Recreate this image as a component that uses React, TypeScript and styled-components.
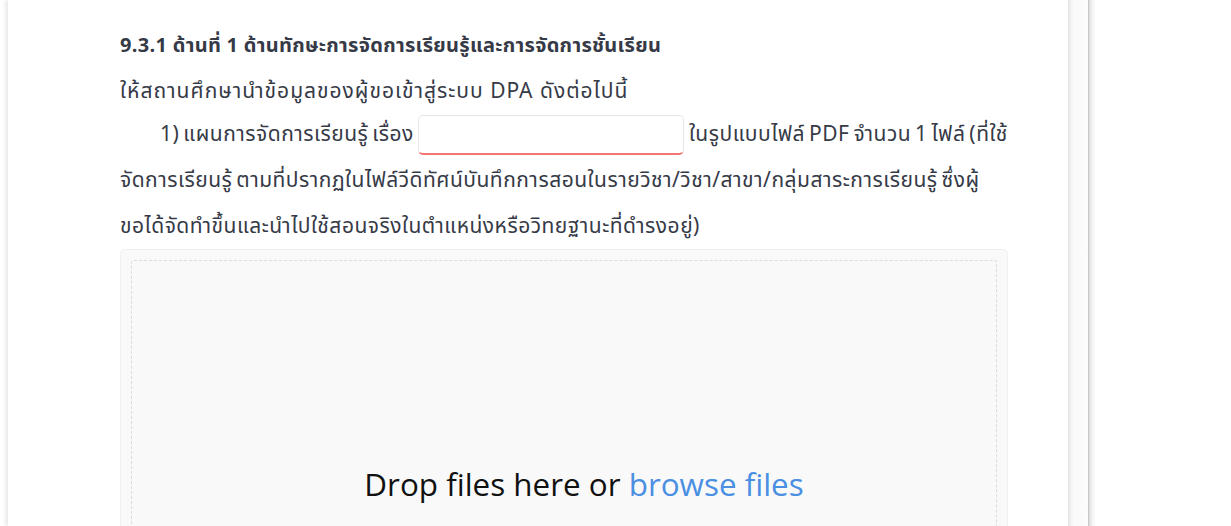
import React from "react";
import styled, { createGlobalStyle } from "styled-components";

const Global = createGlobalStyle`
  html, body { margin: 0; padding: 0; background: #fff; }
  body { overflow: hidden; height: 526px; }
`;

const Page = styled.div`
  display: flex;
  height: 526px;
  background: #fff;
  padding-left: 8px;
`;

const Card = styled.main`
  width: 1060px;
  flex: none;
  background: #fff;
  box-shadow: -3px 0 3px rgba(0, 0, 0, 0.08);
  padding: 0 60px 0 112px;
  box-sizing: border-box;
  overflow: hidden;
  font-family: "Noto Sans Thai", "Noto Sans", "DejaVu Sans", sans-serif;
  color: #363a47;
`;

const Gutter = styled.div`
  width: 20px;
  flex: none;
  background: linear-gradient(to right, #e2e2e2 0, #f3f3f3 3px, #fafafa 6px, #fcfcfc 100%);
`;

const Side = styled.div`
  flex: 1;
  border-left: 1px solid #c9c9c9;
  background: linear-gradient(to right, #dcdcdc 0, #f2f2f2 3px, #fff 7px, #fff 100%);
`;

const Column = styled.div`
  width: 888px;
`;

const Line = styled.div<{ $bold?: boolean }>`
  font-size: ${(p) => (p.$bold ? 20 : 21)}px;
  letter-spacing: ${(p) => (p.$bold ? 0.3 : 1)}px;
  line-height: 45px;
  font-weight: ${(p) => (p.$bold ? 700 : 400)};
  white-space: nowrap;
`;

const CutLine = styled(Line)`
  margin-top: -36px;
  margin-bottom: 15px;
`;

const Para = styled.p`
  margin: -2px 0 0;
  font-size: 21px;
  letter-spacing: 0.5px;
  word-spacing: -2px;
  line-height: 46px;
  text-indent: 40px;
  white-space: nowrap;
`;

const TitleInput = styled.input`
  width: 266px;
  height: 40px;
  box-sizing: border-box;
  margin: 0 5px 0 4px;
  vertical-align: middle;
  border: 1px solid #e3e7ec;
  border-bottom: 2px solid #f47474;
  border-radius: 5px;
  background: #fff;
  outline: none;
  font: inherit;
  text-indent: 0;
`;

const DropZone = styled.div`
  margin-top: -1px;
  height: 300px;
  background: #f9f9f9;
  border: 1px solid #efefef;
  border-radius: 5px;
  padding: 10px;
  box-sizing: border-box;
`;

const DropInner = styled.div`
  height: 100%;
  border: 1px dashed #dcdcdc;
  border-bottom: none;
  border-radius: 3px;
  display: flex;
  align-items: flex-start;
  justify-content: center;
  padding: 204px 0 0 40px;
  box-sizing: border-box;
`;

const DropTitle = styled.div`
  font-family: "Open Sans", "Noto Sans", sans-serif;
  font-size: 31.4px;
  color: #111;
  line-height: 1.2;
`;

const Browse = styled.span`
  color: #4a8fe2;
  cursor: pointer;
`;

export default function App() {
  return (
    <>
      <Global />
      <Page>
        <Card>
          <Column>
            <CutLine $bold>ผู้ขอรับการประเมินนำเสนอผลงาน ตามองค์ประกอบ ดังนี้</CutLine>
            <Line $bold>9.3.1 ด้านที่ 1 ด้านทักษะการจัดการเรียนรู้และการจัดการชั้นเรียน</Line>
            <Line>ให้สถานศึกษานำข้อมูลของผู้ขอเข้าสู่ระบบ DPA ดังต่อไปนี้</Line>
            <Para>
              1) แผนการจัดการเรียนรู้ เรื่อง
              <TitleInput type="text" />
              ในรูปแบบไฟล์ PDF จำนวน 1 ไฟล์ (ที่ใช้
              <br />
              จัดการเรียนรู้ ตามที่ปรากฏในไฟล์วีดิทัศน์บันทึกการสอนในรายวิชา/วิชา/สาขา/กลุ่มสาระการเรียนรู้ ซึ่งผู้
              <br />
              ขอได้จัดทำขึ้นและนำไปใช้สอนจริงในตำแหน่งหรือวิทยฐานะที่ดำรงอยู่)
            </Para>
            <DropZone>
              <DropInner>
                <DropTitle>
                  Drop files here or <Browse>browse files</Browse>
                </DropTitle>
              </DropInner>
            </DropZone>
          </Column>
        </Card>
        <Gutter />
        <Side />
      </Page>
    </>
  );
}
